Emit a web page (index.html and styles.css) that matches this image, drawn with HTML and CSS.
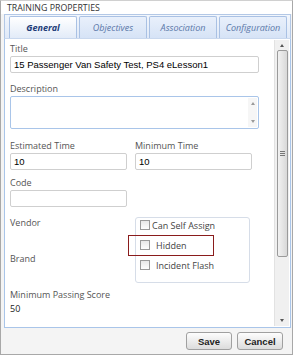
FILE: index.html
```html
<!DOCTYPE html>
<html lang="en">
<head>
    <meta charset="UTF-8">
    <title>Training Properties</title>
    <link rel="stylesheet" href="styles.css">
</head>
<body>
    <div class="dialog">
        <div class="dialog-title">TRAINING PROPERTIES</div>
        <div class="tabs">
            <div class="tab active">General</div>
            <div class="tab">Objectives</div>
            <div class="tab">Association</div>
            <div class="tab">Configuration</div>
        </div>
        <div class="panel">
            <form class="form">
                <div class="field">
                    <label>Title</label>
                    <input type="text" class="input wide" value="15 Passenger Van Safety Test, PS4 eLesson1">
                </div>
                <div class="field desc">
                    <label>Description</label>
                    <div class="textarea">
                        <div class="mini-scroll">
                            <span class="arrow up"></span>
                            <span class="arrow down"></span>
                        </div>
                    </div>
                </div>
                <div class="row times">
                    <div class="field">
                        <label>Estimated Time</label>
                        <input type="text" class="input" value="10">
                    </div>
                    <div class="field">
                        <label>Minimum Time</label>
                        <input type="text" class="input" value="10">
                    </div>
                </div>
                <div class="field code">
                    <label>Code</label>
                    <input type="text" class="input" value="">
                </div>
                <div class="row options">
                    <div class="side-labels">
                        <div class="side-label vendor">Vendor</div>
                        <div class="side-label brand">Brand</div>
                    </div>
                    <div class="checks">
                        <label class="check first"><span class="box"></span>Can Self Assign</label>
                        <label class="check"><span class="box"></span>Hidden</label>
                        <label class="check"><span class="box"></span>Incident Flash</label>
                    </div>
                    <div class="focus-ring"></div>
                </div>
                <div class="field score">
                    <label>Minimum Passing Score</label>
                    <div class="value">50</div>
                </div>
            </form>
            <div class="scrollbar">
                <span class="arrow up"></span>
                <div class="thumb"><span class="grip"></span></div>
                <span class="arrow down"></span>
            </div>
        </div>
        <div class="footer">
            <button type="button" class="btn">Save</button>
            <button type="button" class="btn">Cancel</button>
        </div>
    </div>
</body>
</html>
```

FILE: styles.css
```css
body {
    margin: 0;
    padding: 0;
    background: #ffffff;
    font-family: "Open Sans", "Noto Sans", sans-serif;
}
.dialog {
    width: 293px;
    height: 355px;
    box-sizing: border-box;
    border: 1px solid #a8a8a8;
    border-top-color: #d0d0d0;
    background: #f4f4f4;
    display: flex;
    flex-direction: column;
}
.dialog-title {
    height: 13px;
    padding-left: 6px;
    background: #ffffff;
    font-size: 8.8px;
    line-height: 15px;
    color: #333;
}
.tabs {
    margin: 0 1px 0 3px;
    height: 22px;
    padding: 1px 3px 0 4px;
    display: flex;
    gap: 2px;
    background: linear-gradient(#f2f6fc, #dfe9f8);
    border: 1px solid #b3c8e6;
    border-bottom: none;
}
.tab {
    width: 68px;
    box-sizing: border-box;
    border: 1px solid #a9c1e4;
    border-bottom: none;
    border-radius: 2px 2px 0 0;
    background: linear-gradient(#e9f0fb, #d6e3f6);
    text-align: center;
    font-size: 9px;
    font-style: italic;
    line-height: 22px;
    color: #5a77a8;
}
.tab.active {
    background: linear-gradient(#ffffff, #e2ebf8);
    color: #1d3c78;
    font-weight: 700;
}
.panel {
    margin: 0 1px 0 3px;
    height: 290px;
    box-sizing: border-box;
    border: 1px solid #a9c5e9;
    border-top-color: #c9d8ee;
    background: #ffffff;
    display: flex;
}
.form {
    flex: 1;
    padding: 4px 0 0 5px;
}
.field label,
.side-label {
    display: block;
    font-size: 9px;
    line-height: 12px;
    color: #555;
}
.field label {
    margin-bottom: 1px;
}
.field.desc {
    margin-top: 10px;
}
.row.times {
    margin-top: 11px;
}
.field.code {
    margin-top: 7px;
}
.row.options {
    margin-top: 10px;
}
.field.score {
    margin-top: 6px;
}
.input {
    display: block;
    width: 117px;
    height: 17px;
    box-sizing: border-box;
    margin: 0;
    padding: 0 3px;
    border: 1px solid #cfcfcf;
    border-radius: 2px;
    font-family: "Liberation Sans", Arial, sans-serif;
    font-size: 9.5px;
    color: #000;
}
.input.wide {
    width: 249px;
}
.textarea {
    width: 249px;
    height: 33px;
    box-sizing: border-box;
    border: 1px solid #a9c5e9;
    border-radius: 2px;
    display: flex;
    justify-content: flex-end;
}
.mini-scroll {
    width: 9px;
    margin: 1px;
    display: flex;
    flex-direction: column;
    justify-content: space-between;
    align-items: center;
    background: #f6f6f6;
}
.row {
    display: flex;
    gap: 8px;
}
.row.options {
    position: relative;
    gap: 0;
}
.side-labels {
    width: 125px;
}
.side-label.brand {
    margin-top: 24px;
}
.checks {
    width: 115px;
    height: 66px;
    box-sizing: border-box;
    border: 1px solid #d6dde8;
    border-radius: 3px;
    padding: 1px 0 0 4px;
    display: flex;
    flex-direction: column;
    gap: 8px;
}
.check {
    display: flex;
    align-items: center;
    height: 12px;
    font-size: 9px;
    color: #444;
}
.check .box {
    width: 8px;
    height: 8px;
    margin-right: 6px;
    border: 1px solid #9a9a9a;
    background: linear-gradient(#e8e8e8, #fdfdfd);
}
.check.first .box {
    margin-right: 2px;
}
.focus-ring {
    position: absolute;
    left: 118px;
    top: 18px;
    width: 86px;
    height: 21px;
    box-sizing: border-box;
    border: 1px solid #8a1c1c;
}
.field.score .value {
    margin-top: 2px;
    font-size: 9px;
    line-height: 12px;
    color: #222;
}
.scrollbar {
    width: 14px;
    margin: 1px 1px 1px 0;
    background: #f0f0f0;
    border-left: 1px solid #e2e2e2;
    display: flex;
    flex-direction: column;
    align-items: center;
}
.arrow {
    width: 0;
    height: 0;
    border-left: 2px solid transparent;
    border-right: 2px solid transparent;
}
.arrow.up {
    margin: 4px 0 3px;
    border-bottom: 3px solid #555;
}
.arrow.down {
    margin: auto 0 4px;
    border-top: 3px solid #555;
}
.mini-scroll .arrow.up {
    margin: 4px 0 0;
    border-bottom-color: #999;
}
.mini-scroll .arrow.down {
    margin: 0 0 4px;
    border-top-color: #999;
}
.thumb {
    width: 11px;
    height: 207px;
    box-sizing: border-box;
    border: 1px solid #9a9a9a;
    border-radius: 2px;
    background: linear-gradient(90deg, #f2f2f2, #d8d8d8);
    display: flex;
    align-items: center;
    justify-content: center;
}
.grip {
    width: 5px;
    height: 5px;
    background: repeating-linear-gradient(#777 0 1px, transparent 1px 2px);
}
.footer {
    flex: 1;
    display: flex;
    justify-content: flex-end;
    align-items: center;
    gap: 5px;
    padding-right: 9px;
}
.btn {
    width: 46px;
    height: 18px;
    padding: 0;
    border: 1px solid #a0a0a0;
    border-radius: 3px;
    background: linear-gradient(#fdfdfd, #dcdcdc);
    font-family: "Liberation Sans", Arial, sans-serif;
    font-size: 9.5px;
    font-weight: 700;
    color: #222;
}
```
